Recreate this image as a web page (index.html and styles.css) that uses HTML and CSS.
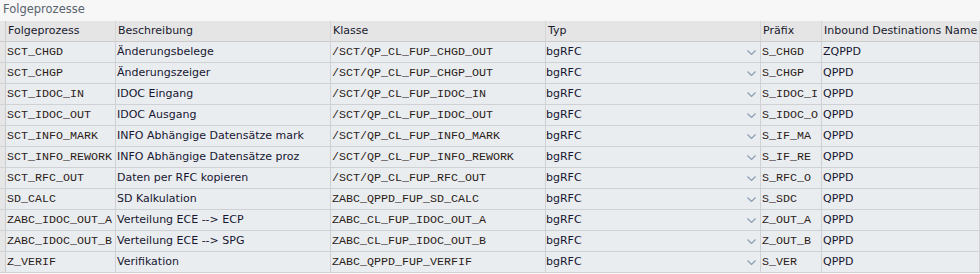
FILE: index.html
```html
<!DOCTYPE html>
<html>
<head>
<meta charset="utf-8">
<link rel="stylesheet" href="styles.css">
</head>
<body>
<div class="panel">
  <div class="title">Folgeprozesse</div>
  <div class="grid">
    <div class="row head">
      <div class="sel"></div>
      <div class="c">Folgeprozess</div>
      <div class="c">Beschreibung</div>
      <div class="c">Klasse</div>
      <div class="c">Typ</div>
      <div class="c">Präfix</div>
      <div class="c">Inbound Destinations Name</div>
    </div>
    <div class="row"><div class="sel"></div><div class="c m">SCT_CHGD</div><div class="c">Änderungsbelege</div><div class="c m">/SCT/QP_CL_FUP_CHGD_OUT</div><div class="c typ"><span>bgRFC</span><svg class="chev" width="9" height="5" viewBox="0 0 9 5"><path d="M0.5 0.5 L4.5 4.5 L8.5 0.5" fill="none" stroke="#8c9db3" stroke-width="1.2"/></svg></div><div class="c m">S_CHGD</div><div class="c">ZQPPD</div></div>
    <div class="row"><div class="sel"></div><div class="c m">SCT_CHGP</div><div class="c">Änderungszeiger</div><div class="c m">/SCT/QP_CL_FUP_CHGP_OUT</div><div class="c typ"><span>bgRFC</span><svg class="chev" width="9" height="5" viewBox="0 0 9 5"><path d="M0.5 0.5 L4.5 4.5 L8.5 0.5" fill="none" stroke="#8c9db3" stroke-width="1.2"/></svg></div><div class="c m">S_CHGP</div><div class="c">QPPD</div></div>
    <div class="row"><div class="sel"></div><div class="c m">SCT_IDOC_IN</div><div class="c">IDOC Eingang</div><div class="c m">/SCT/QP_CL_FUP_IDOC_IN</div><div class="c typ"><span>bgRFC</span><svg class="chev" width="9" height="5" viewBox="0 0 9 5"><path d="M0.5 0.5 L4.5 4.5 L8.5 0.5" fill="none" stroke="#8c9db3" stroke-width="1.2"/></svg></div><div class="c m">S_IDOC_I</div><div class="c">QPPD</div></div>
    <div class="row"><div class="sel"></div><div class="c m">SCT_IDOC_OUT</div><div class="c">IDOC Ausgang</div><div class="c m">/SCT/QP_CL_FUP_IDOC_OUT</div><div class="c typ"><span>bgRFC</span><svg class="chev" width="9" height="5" viewBox="0 0 9 5"><path d="M0.5 0.5 L4.5 4.5 L8.5 0.5" fill="none" stroke="#8c9db3" stroke-width="1.2"/></svg></div><div class="c m">S_IDOC_O</div><div class="c">QPPD</div></div>
    <div class="row"><div class="sel"></div><div class="c m">SCT_INFO_MARK</div><div class="c">INFO Abhängige Datensätze mark</div><div class="c m">/SCT/QP_CL_FUP_INFO_MARK</div><div class="c typ"><span>bgRFC</span><svg class="chev" width="9" height="5" viewBox="0 0 9 5"><path d="M0.5 0.5 L4.5 4.5 L8.5 0.5" fill="none" stroke="#8c9db3" stroke-width="1.2"/></svg></div><div class="c m">S_IF_MA</div><div class="c">QPPD</div></div>
    <div class="row"><div class="sel"></div><div class="c m">SCT_INFO_REWORK</div><div class="c">INFO Abhängige Datensätze proz</div><div class="c m">/SCT/QP_CL_FUP_INFO_REWORK</div><div class="c typ"><span>bgRFC</span><svg class="chev" width="9" height="5" viewBox="0 0 9 5"><path d="M0.5 0.5 L4.5 4.5 L8.5 0.5" fill="none" stroke="#8c9db3" stroke-width="1.2"/></svg></div><div class="c m">S_IF_RE</div><div class="c">QPPD</div></div>
    <div class="row"><div class="sel"></div><div class="c m">SCT_RFC_OUT</div><div class="c">Daten per RFC kopieren</div><div class="c m">/SCT/QP_CL_FUP_RFC_OUT</div><div class="c typ"><span>bgRFC</span><svg class="chev" width="9" height="5" viewBox="0 0 9 5"><path d="M0.5 0.5 L4.5 4.5 L8.5 0.5" fill="none" stroke="#8c9db3" stroke-width="1.2"/></svg></div><div class="c m">S_RFC_O</div><div class="c">QPPD</div></div>
    <div class="row"><div class="sel"></div><div class="c m">SD_CALC</div><div class="c">SD Kalkulation</div><div class="c m">ZABC_QPPD_FUP_SD_CALC</div><div class="c typ"><span>bgRFC</span><svg class="chev" width="9" height="5" viewBox="0 0 9 5"><path d="M0.5 0.5 L4.5 4.5 L8.5 0.5" fill="none" stroke="#8c9db3" stroke-width="1.2"/></svg></div><div class="c m">S_SDC</div><div class="c">QPPD</div></div>
    <div class="row"><div class="sel"></div><div class="c m">ZABC_IDOC_OUT_A</div><div class="c">Verteilung ECE --&gt; ECP</div><div class="c m">ZABC_CL_FUP_IDOC_OUT_A</div><div class="c typ"><span>bgRFC</span><svg class="chev" width="9" height="5" viewBox="0 0 9 5"><path d="M0.5 0.5 L4.5 4.5 L8.5 0.5" fill="none" stroke="#8c9db3" stroke-width="1.2"/></svg></div><div class="c m">Z_OUT_A</div><div class="c">QPPD</div></div>
    <div class="row"><div class="sel"></div><div class="c m">ZABC_IDOC_OUT_B</div><div class="c">Verteilung ECE --&gt; SPG</div><div class="c m">ZABC_CL_FUP_IDOC_OUT_B</div><div class="c typ"><span>bgRFC</span><svg class="chev" width="9" height="5" viewBox="0 0 9 5"><path d="M0.5 0.5 L4.5 4.5 L8.5 0.5" fill="none" stroke="#8c9db3" stroke-width="1.2"/></svg></div><div class="c m">Z_OUT_B</div><div class="c">QPPD</div></div>
    <div class="row"><div class="sel"></div><div class="c m">Z_VERIF</div><div class="c">Verifikation</div><div class="c m">ZABC_QPPD_FUP_VERFIF</div><div class="c typ"><span>bgRFC</span><svg class="chev" width="9" height="5" viewBox="0 0 9 5"><path d="M0.5 0.5 L4.5 4.5 L8.5 0.5" fill="none" stroke="#8c9db3" stroke-width="1.2"/></svg></div><div class="c m">S_VER</div><div class="c">QPPD</div></div>
  </div>
</div>
</body>
</html>
```
FILE: styles.css
```css
html, body {
  margin: 0;
  padding: 0;
  background: #f7f7f7;
}
.panel {
  width: 980px;
  height: 274px;
  overflow: hidden;
  font-family: "DejaVu Sans", Verdana, sans-serif;
  font-size: 11px;
}
.title {
  height: 21px;
  line-height: 18px;
  padding-left: 3px;
  font-size: 11.5px;
  color: #59646e;
  background: #f7f7f7;
}
.row {
  display: grid;
  grid-template-columns: 6px 110px 215px 215px 215px 61px 158px;
  height: 21px;
  background: #eaedf0;
  border-bottom: 1px solid #cfd1d4;
  box-sizing: border-box;
}
.row.head {
  background: #e5e5e5;
  border-bottom-color: #cccccc;
}
.sel {
  background: #e6e6e6;
  border-right: 1px solid #cccccc;
}
.c {
  border-right: 1px solid #cfd1d4;
  padding-left: 1px;
  line-height: 20px;
  white-space: nowrap;
  overflow: hidden;
  color: #161630;
}
.head .c {
  padding-left: 2px;
  border-right-color: #d6d6d6;
  color: #1a1a2e;
}
.c.m {
  font-family: "Liberation Mono", "Courier New", monospace;
  font-size: 11.67px;
  color: #2b2117;
}
.c.typ {
  display: flex;
  align-items: center;
  justify-content: space-between;
  padding-right: 4px;
  padding-left: 0;
}
.typ span {
  line-height: 20px;
}
.chev {
  display: block;
}
```
